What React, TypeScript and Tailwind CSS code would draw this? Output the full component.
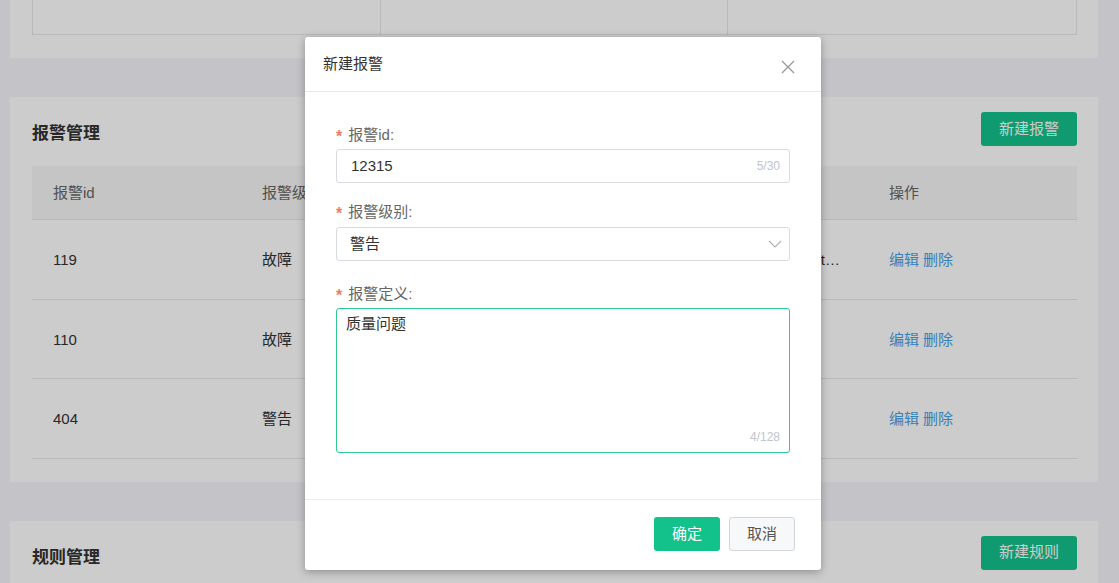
import React from "react";

const FONT = { fontFamily: '"Liberation Sans", "Noto Sans CJK SC", Arial, sans-serif' };

function TableHeader() {
  return (
    <div className="grid grid-cols-[1fr_1fr_2fr_1fr] h-[54px] items-center pt-[2px] bg-[#f7f7f7] text-[15px] text-[#666] border-b border-[#e8e8e8]">
      <div className="pl-[21px]">报警id</div>
      <div className="pl-[21px]">报警级别</div>
      <div className="pl-[21px]">报警定义</div>
      <div className="pl-[21px]">操作</div>
    </div>
  );
}

const rows = [
  { id: "119", level: "故障", def: "Production line temperature is too high, please check it out", long: true },
  { id: "110", level: "故障", def: "质量问题", long: false },
  { id: "404", level: "警告", def: "质量问题", long: false },
];

function Card({ title, btn, children }: { title: string; btn: string; children?: React.ReactNode }) {
  return (
    <div className="bg-white pl-[22px] pr-[21px] pt-[15px] pb-[23px]">
      <div className="flex justify-between items-start h-[34px]">
        <div className="pt-[10px] text-[17px] leading-[24px] font-bold text-[#333]">{title}</div>
        <button className="h-[34px] w-[96px] rounded-[3px] bg-[#13c28b] text-white text-[15px]">{btn}</button>
      </div>
      {children}
    </div>
  );
}

function Label({ text }: { text: string }) {
  return (
    <div className="h-[20px] flex items-center text-[15px] text-[#666] pt-[2px]">
      <span className="text-[#f47a5e] mr-[6px] text-[16px] font-bold mt-[4px]">*</span>
      {text}
    </div>
  );
}

export default function App() {
  return (
    <div style={FONT} className="relative w-[1119px] h-[583px] overflow-hidden bg-[#f5f6fb]">
      <div className="pl-[10px] pr-[21px] flex flex-col gap-[39px]">
        {/* top card (scrolled) */}
        <div className="bg-white pl-[22px] pr-[21px] pb-[23px]">
          <div className="grid grid-cols-3 h-[35px] border-l border-r border-b border-[#e8e8e8]">
            <div className="border-r border-[#e8e8e8]" />
            <div className="border-r border-[#e8e8e8]" />
            <div />
          </div>
        </div>

        <Card title="报警管理" btn="新建报警">
          <div className="mt-[20px]">
            <TableHeader />
            {rows.map((r) => (
              <div
                key={r.id}
                className="grid grid-cols-[1fr_1fr_2fr_1fr] h-[79.5px] items-center pt-[2px] text-[15px] text-[#333] border-b border-[#e8e8e8]"
              >
                <div className="pl-[21px]">{r.id}</div>
                <div className="pl-[21px]">{r.level}</div>
                <div className="pl-[21px] pr-[28px] min-w-0">
                  {r.long ? (
                    <div className="flex justify-end overflow-hidden whitespace-nowrap">
                      <span>{r.def.slice(0, 50)} t…</span>
                    </div>
                  ) : (
                    <div className="truncate">{r.def}</div>
                  )}
                </div>
                <div className="pl-[21px] text-[#4aa2e6] flex gap-[4px]">
                  <span>编辑</span>
                  <span>删除</span>
                </div>
              </div>
            ))}
          </div>
        </Card>

        <Card title="规则管理" btn="新建规则">
          <div className="h-[200px]" />
        </Card>
      </div>

      {/* overlay */}
      <div className="absolute inset-0 bg-black/20" />

      {/* dialog */}
      <div className="absolute left-[305px] top-[37px] w-[516px] h-[533px] bg-white rounded-[3px] shadow-[0_2px_8px_rgba(0,0,0,0.3)] flex flex-col">
        <div className="h-[55px] flex items-center justify-between pl-[18px] pr-[26px] pt-[1px] border-b border-[#e8e8e8]">
          <span className="text-[15px] text-[#333]">新建报警</span>
          <svg width="14" height="14" viewBox="0 0 14 14" className="mt-[4px]">
            <path d="M1 1L13 13M13 1L1 13" stroke="#999" strokeWidth="1.3" fill="none" />
          </svg>
        </div>

        <div className="flex-1 px-[31px] pt-[32px]">
          <Label text="报警id:" />
          <div className="mt-[5px] h-[34px] border border-[#d8dbe0] rounded-[3px] flex items-center pl-[14px] pr-[9px]">
            <span className="flex-1 text-[15px] text-[#333]">12315</span>
            <span className="text-[12px] text-[#c0c4cc]">5/30</span>
          </div>

          <div className="mt-[18px]">
            <Label text="报警级别:" />
          </div>
          <div className="mt-[6px] h-[34px] border border-[#d8dbe0] rounded-[3px] flex items-center pl-[13px] pr-[7px]">
            <span className="flex-1 text-[15px] text-[#333]">警告</span>
            <svg width="14" height="8" viewBox="0 0 14 8">
              <path d="M1 1L7 7L13 1" stroke="#b4b4b4" strokeWidth="1.2" fill="none" />
            </svg>
          </div>

          <div className="mt-[22px]">
            <Label text="报警定义:" />
          </div>
          <div className="relative mt-[5px] h-[145px] border border-[#2fc996] rounded-[3px] pl-[9px] pt-[3px]">
            <span className="text-[15px] leading-[20px] text-[#333]">质量问题</span>
            <span className="absolute right-[9px] bottom-[6px] text-[12px] text-[#c0c4cc]">4/128</span>
          </div>
        </div>

        <div className="h-[71px] border-t border-[#ececec] flex justify-end items-start pt-[17px] pr-[26px] gap-[9px]">
          <button className="h-[34px] w-[66px] rounded-[3px] bg-[#13c28b] text-white text-[15px]">确定</button>
          <button className="h-[34px] w-[66px] rounded-[3px] bg-[#f7f8fa] border border-[#d3d6db] text-[#555] text-[15px]">取消</button>
        </div>
      </div>
    </div>
  );
}
